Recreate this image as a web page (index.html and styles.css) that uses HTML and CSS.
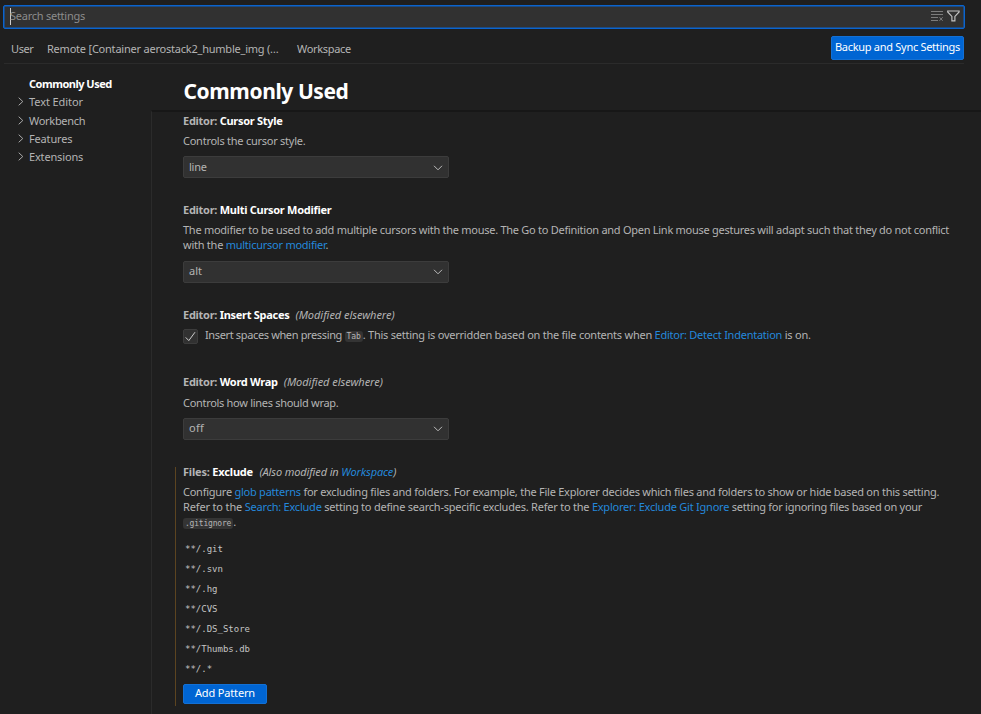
FILE: index.html
```html
<!DOCTYPE html>
<html lang="en">
<head>
<meta charset="utf-8">
<title>Settings</title>
<link rel="stylesheet" href="styles.css">
</head>
<body>
<div class="settings">
  <div class="search">
    <span class="caret"></span>
    <span class="placeholder">Search settings</span>
    <svg class="icon-clear" width="13" height="11" viewBox="0 0 13 11"><path d="M0 .5h12M0 3.5h12M0 6.5h7M0 9.5h7M8.5 6.2l3.2 3.6M11.7 6.2 8.5 9.8"/></svg>
    <svg class="icon-filter" width="13" height="12" viewBox="0 0 13 12"><path d="M.7 1h11.4v1L7.9 6.4v4.4H4.9V6.4L.7 2z"/></svg>
  </div>
  <div class="scope">
    <span class="tab tab-user">User</span>
    <span class="tab tab-remote">Remote [Container aerostack2_humble_img (…</span>
    <span class="tab tab-workspace">Workspace</span>
    <button class="button sync">Backup and Sync Settings</button>
  </div>
  <div class="body">
    <nav class="toc">
      <div class="toc-row active">Commonly Used</div>
      <div class="toc-row"><svg class="chev" width="6" height="9" viewBox="0 0 6 9"><path d="M.7.7 4.8 4.5.7 8.3"/></svg><span class="text-editor">Text Editor</span></div>
      <div class="toc-row workbench"><svg class="chev" width="6" height="9" viewBox="0 0 6 9"><path d="M.7.7 4.8 4.5.7 8.3"/></svg><span class="tight">Workbench</span></div>
      <div class="toc-row"><svg class="chev" width="6" height="9" viewBox="0 0 6 9"><path d="M.7.7 4.8 4.5.7 8.3"/></svg><span>Features</span></div>
      <div class="toc-row"><svg class="chev" width="6" height="9" viewBox="0 0 6 9"><path d="M.7.7 4.8 4.5.7 8.3"/></svg><span>Extensions</span></div>
    </nav>
    <main class="main">
      <h1 class="heading">Commonly Used</h1>
      <div class="list">
        <section class="item item-cursor">
          <div class="title"><span class="cat">Editor:</span> Cursor Style</div>
          <div class="desc">Controls the cursor style.</div>
          <div class="select"><span>line</span><svg width="10" height="6" viewBox="0 0 10 6"><path d="M1 .8 5 4.8 9 .8"/></svg></div>
        </section>
        <section class="item item-modifier">
          <div class="title"><span class="cat">Editor:</span> Multi Cursor Modifier</div>
          <div class="desc"><span class="line-modifier">The modifier to be used to add multiple cursors with the mouse. The Go to Definition and Open Link mouse gestures will adapt such that they do not conflict</span><br>with the <a>multicursor modifier</a>.</div>
          <div class="select"><span class="natural">alt</span><svg width="10" height="6" viewBox="0 0 10 6"><path d="M1 .8 5 4.8 9 .8"/></svg></div>
        </section>
        <section class="item item-spaces">
          <div class="title"><span class="cat">Editor:</span> Insert Spaces<i>(Modified elsewhere)</i></div>
          <div class="check-row">
            <span class="checkbox"><svg width="13" height="13" viewBox="0 0 13 13"><path d="M1.7 7.4 4.8 10.6 11 2.2"/></svg></span>
            <div class="desc"><span class="tighter">Insert spaces when pressing</span> <code class="key">Tab</code><span class="line-tab">. This setting is overridden based on the file contents when <a>Editor: Detect Indentation</a> is on.</span></div>
          </div>
        </section>
        <section class="item item-wrap">
          <div class="title"><span class="cat">Editor:</span> Word Wrap<i>(Modified elsewhere)</i></div>
          <div class="desc tight">Controls how lines should wrap.</div>
          <div class="select"><span class="loose">off</span><svg width="10" height="6" viewBox="0 0 10 6"><path d="M1 .8 5 4.8 9 .8"/></svg></div>
        </section>
        <section class="item item-exclude">
          <div class="title"><span class="title-files"><span class="cat">Files:</span> Exclude</span><i class="also">(Also modified in <a>Workspace</a>)</i></div>
          <div class="desc">Configure <a>glob patterns</a> for excluding files and folders. For example, the File Explorer decides which files and folders to show or hide based on this setting.<br><span class="line-refer"><span class="refer-start">Refer to the </span><a>Search: Exclude</a> setting to define search-specific excludes. Refer to the <a>Explorer: Exclude Git Ignore</a><span class="refer-end"> setting for ignoring files based on your</span></span><br><code>.gitignore</code>.</div>
          <div class="patterns">
            <div>**/.git</div><div>**/.svn</div><div>**/.hg</div><div>**/CVS</div><div>**/.DS_Store</div><div>**/Thumbs.db</div><div>**/.*</div>
          </div>
          <button class="button add">Add Pattern</button>
        </section>
      </div>
    </main>
  </div>
</div>
</body>
</html>
```
FILE: styles.css
```css
* { box-sizing: border-box; }
body { margin: 0; background: #1f1f1f; color: #b4b4b4; font: 11px/15px "Noto Sans", sans-serif; letter-spacing: -.25px; overflow: hidden; }
.settings { width: 981px; height: 714px; display: flex; flex-direction: column; padding-top: 5px; white-space: nowrap; }
a { color: #2488db; }
.natural { letter-spacing: 0; }
.text-editor { letter-spacing: -.08px; }
.loose { letter-spacing: .25px; }
.tight { letter-spacing: -.3px; }
.tighter { letter-spacing: -.361px; }
.search { margin: 0 16px 0 3px; height: 24px; border: 1px solid #0a64cf; border-radius: 2px; background: #313131; display: flex; align-items: center; flex: none; padding: 0 4px 2px 6px; box-shadow: inset 0 0 0 .5px #0a64cf; }
.placeholder { flex: 1; color: #8c8c8c; margin-left: -1px; padding-bottom: 2px; }
.caret { width: 1px; height: 17px; background: #ccc; }
.icon-clear, .icon-filter { fill: none; stroke: #7c7c7c; }
.icon-clear { margin-right: 3px; }
.icon-filter { stroke: #c4c4c4; stroke-width: 1.15; }
.scope { display: flex; align-items: center; height: 35px; margin: 0 17px 0 4px; padding: 4px 0 0 7px; border-bottom: 1px solid #2b2b2b; flex: none; }
.button { font: inherit; letter-spacing: inherit; color: #fff; background: #0065d3; border: 1px solid #1370d4; border-radius: 2px; padding: 0; }
.sync { width: 133px; height: 24px; margin-left: auto; padding-bottom: 4px; letter-spacing: -.289px; }
.tab-user { width: 36px; letter-spacing: -.391px; }
.tab-remote { width: 250px; letter-spacing: -.22px; }
.tab-workspace { letter-spacing: -.309px; }
.body { display: flex; flex: 1; min-height: 0; }
.toc { width: 151px; flex: none; padding: 10px 0 0 18px; letter-spacing: -.16px; }
.toc-row { height: 18.3px; display: flex; align-items: center; }
.toc-row.workbench { padding-top: 1px; }
.toc-row.active { padding-left: 11px; font-weight: bold; color: #fff; letter-spacing: -.5px; }
.chev { fill: none; stroke: #aaa; margin-right: 5px; }
.main { flex: 1; min-width: 0; }
.heading { margin: 0; height: 46px; padding: 12px 0 0 32.5px; font-size: 21px; line-height: 30px; letter-spacing: -.406px; color: #fff; }
.list { border-left: 1px solid #2b2b2b; border-top: 2px solid #171717; height: 604px; padding: 1px 0 0 23px; }
.item { padding-left: 8px; }
.item-cursor { height: 89px; }
.item-modifier { height: 105px; }
.item-modifier .select { margin-top: 9px; }
.item-spaces { height: 67px; }
.item-wrap { height: 93px; }
.item-wrap .title { margin-bottom: 6px; }
.item-exclude { display: flow-root; height: 239px; padding-left: 7px; border-left: 1px solid #5c4420; }
.item-exclude .title { margin-top: -3px; }
.title { font-weight: bold; color: #fff; margin-bottom: 5px; letter-spacing: -.28px; }
.title i { font-weight: normal; color: #b4b4b4; margin-left: 6px; letter-spacing: -.04px; }
.title .also { letter-spacing: -.13px; margin-left: 6.5px; }
.title-files { letter-spacing: -.184px; }
.title .cat { color: #b4b4b4; }
.line-modifier { letter-spacing: -.268px; }
.line-tab { letter-spacing: -.244px; }
.line-refer { letter-spacing: -.228px; }
.refer-start { letter-spacing: -.15px; }
.refer-end { letter-spacing: -.27px; }
.select { width: 266px; height: 22px; margin-top: 8px; border: 1px solid #3c3c3c; border-radius: 2px; background: #313131; display: flex; align-items: center; justify-content: space-between; padding: 0 5.5px 1px 5px; }
.item-modifier .select, .item-wrap .select { padding-bottom: 3px; }
.select svg { fill: none; stroke: #bbb; margin-top: 2px; }
.check-row { display: flex; }
.checkbox { width: 15px; height: 15px; border: 1px solid #3c3c3c; border-radius: 2px; background: #313131; margin: 2px 7px 0 0; }
.checkbox svg { display: block; fill: none; stroke: #ccc; }
code { font: 8px/12px "DejaVu Sans Mono", monospace; letter-spacing: -.2px; background: #343434; border-radius: 3px; padding: 1px 2px; }
.key { letter-spacing: -.1px; }
.patterns { font: 9px/20px "DejaVu Sans Mono", monospace; letter-spacing: 0; margin-top: 9px; padding-left: 2px; color: #c4c4c4; }
.add { width: 84px; height: 20px; margin-top: 5px; display: block; letter-spacing: -.158px; padding-bottom: 3px; }
```
